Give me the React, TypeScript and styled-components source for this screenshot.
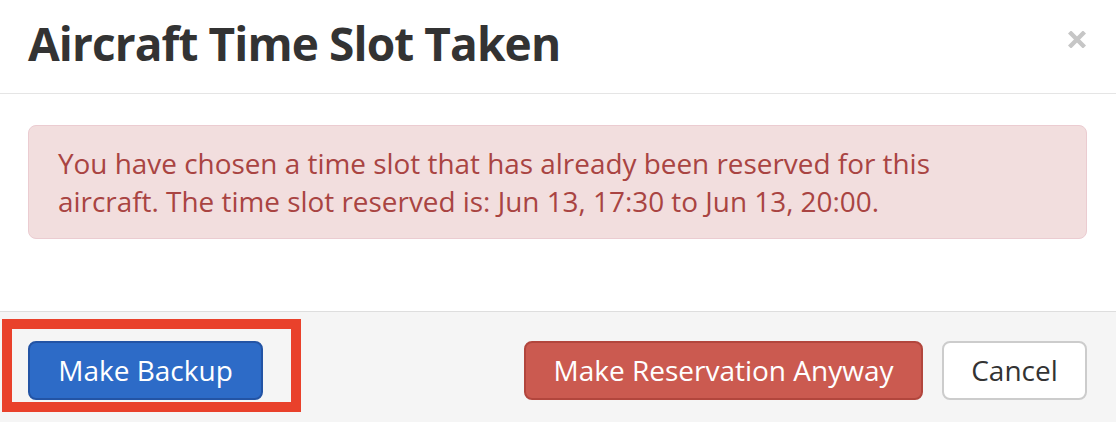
import React from "react";
import styled, { createGlobalStyle } from "styled-components";

const Global = createGlobalStyle`
  html, body { margin: 0; padding: 0; background: #ffffff; }
  body { font-family: "Open Sans", "Liberation Sans", sans-serif; color: #333333; }
  * { box-sizing: border-box; }
`;

const Modal = styled.div`
  width: 1116px;
  height: 422px;
  overflow: hidden;
  display: flex;
  flex-direction: column;
  background: #ffffff;
`;

const Header = styled.div`
  display: flex;
  justify-content: space-between;
  align-items: flex-start;
  padding: 17px 30px 24px 28px;
  border-bottom: 1px solid #e5e5e5;
`;

const Title = styled.h4`
  margin: 0;
  font-size: 46px;
  line-height: 52px;
  font-weight: 700;
  color: #333333;
  letter-spacing: -0.9px;
`;

const Close = styled.button`
  border: 0;
  background: transparent;
  padding: 0;
  margin-top: 13px;
  width: 18px;
  height: 18px;
  display: flex;
  align-items: center;
  justify-content: center;
  cursor: pointer;
`;

const Body = styled.div`
  padding: 31px 29px 30px 28px;
`;

const Alert = styled.div`
  background: #f2dede;
  border: 1px solid #ebccd1;
  border-radius: 8px;
  color: #a94442;
  font-size: 27.9px;
  line-height: 38px;
  padding: 18px 80px 18px 29px;
  margin-bottom: 42px;
`;

const Footer = styled.div`
  flex: 1;
  display: flex;
  justify-content: space-between;
  align-items: flex-start;
  padding: 29px 29px 30px 28px;
  background: #f5f5f5;
  border-top: 1px solid #dedede;
`;

const Group = styled.div`
  display: flex;
  gap: 19px;
`;

const Highlighted = styled.div`
  position: relative;
  display: flex;
`;

const Highlight = styled.div`
  position: absolute;
  left: -26px;
  top: -22px;
  right: -38px;
  bottom: -12px;
  border: 10px solid #e9412b;
  pointer-events: none;
`;

type Variant = "primary" | "danger" | "default";

const palette: Record<Variant, { bg: string; border: string; color: string }> = {
  primary: { bg: "#2d6bc7", border: "#2354a5", color: "#ffffff" },
  danger: { bg: "#cb5a50", border: "#b2463d", color: "#ffffff" },
  default: { bg: "#ffffff", border: "#cccccc", color: "#333333" },
};

const Button = styled.button<{ $variant: Variant; $w: number }>`
  width: ${(p) => p.$w}px;
  height: 59px;
  font-family: "Open Sans", "Liberation Sans", sans-serif;
  font-size: 28px;
  line-height: 35px;
  padding: 0;
  border-radius: 8px;
  cursor: pointer;
  background: ${(p) => palette[p.$variant].bg};
  border: 2px solid ${(p) => palette[p.$variant].border};
  color: ${(p) => palette[p.$variant].color};
  text-align: center;
`;

export default function App() {
  return (
    <>
      <Global />
      <Modal>
        <Header>
          <Title>Aircraft Time Slot Taken</Title>
          <Close aria-label="Close">
            <svg width="18" height="17" viewBox="0 0 18 17">
              <path d="M1.5 1 L16.5 16 M16.5 1 L1.5 16" stroke="#c6c6c6" strokeWidth="4.4" strokeLinecap="butt" />
            </svg>
          </Close>
        </Header>
        <Body>
          <Alert>
            You have chosen a time slot that has already been reserved for this
            aircraft. The time slot reserved is: Jun 13, 17:30 to Jun 13, 20:00.
          </Alert>
        </Body>
        <Footer>
          <Highlighted>
            <Button $variant="primary" $w={235}>Make Backup</Button>
            <Highlight />
          </Highlighted>
          <Group>
            <Button $variant="danger" $w={399}>Make Reservation Anyway</Button>
            <Button $variant="default" $w={145}>Cancel</Button>
          </Group>
        </Footer>
      </Modal>
    </>
  );
}
